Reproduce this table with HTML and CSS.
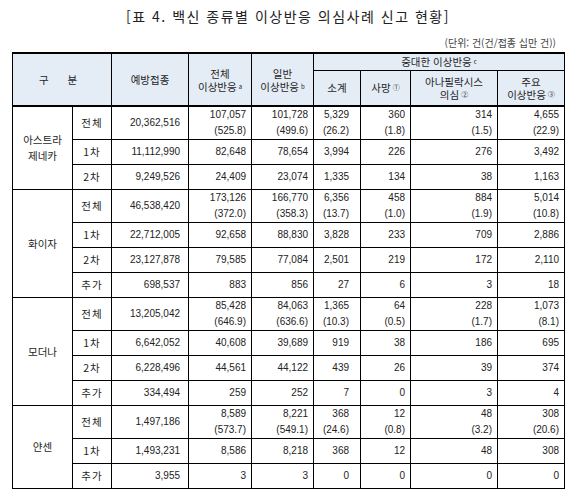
FILE: index.html
```html
<!DOCTYPE html>
<html lang="ko">
<head>
    <meta charset="UTF-8">
    <meta name="viewport" content="width=device-width, initial-scale=1.0">
    <title>백신 종류별 이상반응 의심사례 신고 현황</title>
    <link rel="stylesheet" href="styles.css">
</head>
<body>
    <div class="page">
        <h1 class="title">[표 4. 백신 종류별 이상반응 의심사례 신고 현황]</h1>
        <p class="unit">(단위: 건(건/접종 십만 건))</p>

        <table class="stats">
            <colgroup>
                <col class="c-group">
                <col class="c-sub">
                <col class="c-dose">
                <col class="c-all">
                <col class="c-gen">
                <col class="c-sum">
                <col class="c-death">
                <col class="c-ana">
                <col class="c-major">
            </colgroup>
            <thead>
                <tr class="head-top">
                    <th colspan="2" rowspan="2"><span class="spread">구 분</span></th>
                    <th rowspan="2">예방접종</th>
                    <th rowspan="2">전체<br>이상반응<sup>a</sup></th>
                    <th rowspan="2">일반<br>이상반응<sup>b</sup></th>
                    <th colspan="4">중대한 이상반응<sup>c</sup></th>
                </tr>
                <tr class="head-sub">
                    <th>소계</th>
                    <th>사망<sup class="circ">①</sup></th>
                    <th>아나필락시스<br>의심<sup class="circ">②</sup></th>
                    <th>주요<br>이상반응<sup class="circ">③</sup></th>
                </tr>
            </thead>
            <tbody>
                <!-- 아스트라제네카 -->
                <tr class="dbl">
                    <td class="group" rowspan="3">아스트라<br>제네카</td>
                    <td class="sub">전체</td>
                    <td class="num dose">20,362,516</td>
                    <td class="num">107,057<br>(525.8)</td>
                    <td class="num">101,728<br>(499.6)</td>
                    <td class="num sum">5,329<br>(26.2)</td>
                    <td class="num">360<br>(1.8)</td>
                    <td class="num">314<br>(1.5)</td>
                    <td class="num">4,655<br>(22.9)</td>
                </tr>
                <tr>
                    <td class="sub">1차</td>
                    <td class="num dose">11,112,990</td>
                    <td class="num">82,648</td>
                    <td class="num">78,654</td>
                    <td class="num sum">3,994</td>
                    <td class="num">226</td>
                    <td class="num">276</td>
                    <td class="num">3,492</td>
                </tr>
                <tr>
                    <td class="sub">2차</td>
                    <td class="num dose">9,249,526</td>
                    <td class="num">24,409</td>
                    <td class="num">23,074</td>
                    <td class="num sum">1,335</td>
                    <td class="num">134</td>
                    <td class="num">38</td>
                    <td class="num">1,163</td>
                </tr>

                <!-- 화이자 -->
                <tr class="dbl">
                    <td class="group" rowspan="4">화이자</td>
                    <td class="sub">전체</td>
                    <td class="num dose">46,538,420</td>
                    <td class="num">173,126<br>(372.0)</td>
                    <td class="num">166,770<br>(358.3)</td>
                    <td class="num sum">6,356<br>(13.7)</td>
                    <td class="num">458<br>(1.0)</td>
                    <td class="num">884<br>(1.9)</td>
                    <td class="num">5,014<br>(10.8)</td>
                </tr>
                <tr>
                    <td class="sub">1차</td>
                    <td class="num dose">22,712,005</td>
                    <td class="num">92,658</td>
                    <td class="num">88,830</td>
                    <td class="num sum">3,828</td>
                    <td class="num">233</td>
                    <td class="num">709</td>
                    <td class="num">2,886</td>
                </tr>
                <tr>
                    <td class="sub">2차</td>
                    <td class="num dose">23,127,878</td>
                    <td class="num">79,585</td>
                    <td class="num">77,084</td>
                    <td class="num sum">2,501</td>
                    <td class="num">219</td>
                    <td class="num">172</td>
                    <td class="num">2,110</td>
                </tr>
                <tr>
                    <td class="sub">추가</td>
                    <td class="num dose">698,537</td>
                    <td class="num">883</td>
                    <td class="num">856</td>
                    <td class="num sum">27</td>
                    <td class="num">6</td>
                    <td class="num">3</td>
                    <td class="num">18</td>
                </tr>

                <!-- 모더나 -->
                <tr class="dbl">
                    <td class="group" rowspan="4">모더나</td>
                    <td class="sub">전체</td>
                    <td class="num dose">13,205,042</td>
                    <td class="num">85,428<br>(646.9)</td>
                    <td class="num">84,063<br>(636.6)</td>
                    <td class="num sum">1,365<br>(10.3)</td>
                    <td class="num">64<br>(0.5)</td>
                    <td class="num">228<br>(1.7)</td>
                    <td class="num">1,073<br>(8.1)</td>
                </tr>
                <tr>
                    <td class="sub">1차</td>
                    <td class="num dose">6,642,052</td>
                    <td class="num">40,608</td>
                    <td class="num">39,689</td>
                    <td class="num sum">919</td>
                    <td class="num">38</td>
                    <td class="num">186</td>
                    <td class="num">695</td>
                </tr>
                <tr>
                    <td class="sub">2차</td>
                    <td class="num dose">6,228,496</td>
                    <td class="num">44,561</td>
                    <td class="num">44,122</td>
                    <td class="num sum">439</td>
                    <td class="num">26</td>
                    <td class="num">39</td>
                    <td class="num">374</td>
                </tr>
                <tr>
                    <td class="sub">추가</td>
                    <td class="num dose">334,494</td>
                    <td class="num">259</td>
                    <td class="num">252</td>
                    <td class="num sum">7</td>
                    <td class="num">0</td>
                    <td class="num">3</td>
                    <td class="num">4</td>
                </tr>

                <!-- 얀센 -->
                <tr class="dbl">
                    <td class="group" rowspan="3">얀센</td>
                    <td class="sub">전체</td>
                    <td class="num dose">1,497,186</td>
                    <td class="num">8,589<br>(573.7)</td>
                    <td class="num">8,221<br>(549.1)</td>
                    <td class="num sum">368<br>(24.6)</td>
                    <td class="num">12<br>(0.8)</td>
                    <td class="num">48<br>(3.2)</td>
                    <td class="num">308<br>(20.6)</td>
                </tr>
                <tr>
                    <td class="sub">1차</td>
                    <td class="num dose">1,493,231</td>
                    <td class="num">8,586</td>
                    <td class="num">8,218</td>
                    <td class="num sum">368</td>
                    <td class="num">12</td>
                    <td class="num">48</td>
                    <td class="num">308</td>
                </tr>
                <tr>
                    <td class="sub">추가</td>
                    <td class="num dose">3,955</td>
                    <td class="num">3</td>
                    <td class="num">3</td>
                    <td class="num sum">0</td>
                    <td class="num">0</td>
                    <td class="num">0</td>
                    <td class="num">0</td>
                </tr>
            </tbody>
        </table>
    </div>
</body>
</html>
```

FILE: styles.css
```css
* {
    margin: 0;
    padding: 0;
    box-sizing: border-box;
}
body {
    background-color: #fff;
    color: #1e1e1e;
    font-family: "Noto Sans CJK KR", "Noto Sans", sans-serif;
}
.page {
    width: 564px;
    padding: 7px 0 0 12px;
}
.title {
    font-size: 14px;
    font-weight: 400;
    line-height: 18px;
    letter-spacing: 1.5px;
    text-align: center;
    color: #222;
}
.unit {
    margin-top: 12px;
    padding-right: 8px;
    font-size: 10px;
    line-height: 12px;
    text-align: right;
    color: #444;
}
.stats {
    margin-top: 3px;
    width: 552px;
    border-collapse: collapse;
    table-layout: fixed;
    font-size: 10.5px;
}
.c-group { width: 60px; }
.c-sub { width: 39px; }
.c-dose { width: 77px; }
.c-all { width: 63px; }
.c-gen { width: 62px; }
.c-sum { width: 47px; }
.c-death { width: 50px; }
.c-ana { width: 87px; }
.c-major { width: 67px; }
.stats th, .stats td {
    border: 1px solid #000;
    padding: 0;
}
.stats th {
    background-color: #e4ecf6;
    font-weight: 400;
    line-height: 13px;
    vertical-align: middle;
    text-align: center;
}
.stats thead tr:first-child th {
    border-top: 2px solid #000;
}
.stats thead tr:last-child th,
.stats thead th[rowspan] {
    border-bottom: 2px solid #000;
}
.head-top { height: 17px; }
.head-sub { height: 36px; }
.spread {
    letter-spacing: 8px;
}
sup {
    font-size: 6px;
    line-height: 1;
    vertical-align: 2px;
    margin-left: 2px;
}
sup.circ {
    font-size: 7px;
    vertical-align: 2px;
}
.stats tbody tr { height: 25px; }
.stats tbody tr.dbl { height: 33px; }
.stats td {
    line-height: 16px;
    vertical-align: middle;
}
.group {
    text-align: center;
    line-height: 12px;
}
.sub {
    text-align: center;
    letter-spacing: 1px;
}
.num {
    font-family: "Liberation Sans", Arial, sans-serif;
    font-size: 10px;
    text-align: right;
    padding-right: 5px !important;
    color: #222;
}
.num.dose { padding-right: 8px !important; }
.num.sum { padding-right: 11px !important; }
.stats tbody tr:last-child td { border-bottom: 1.5px solid #000; }
```
